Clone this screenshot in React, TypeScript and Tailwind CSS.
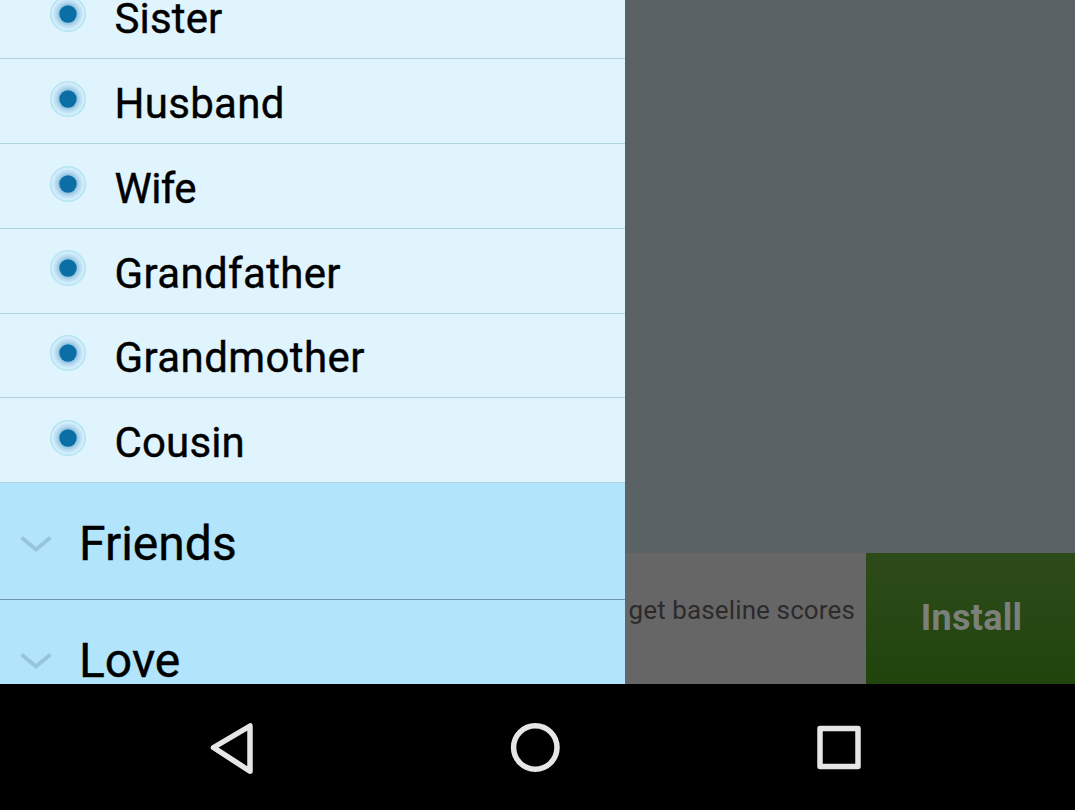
const relatives = [
  { name: "Sister", tracking: "tracking-[0.15px]" },
  { name: "Husband", tracking: "tracking-[0.3px]" },
  { name: "Wife", tracking: "tracking-[-0.6px]" },
  { name: "Grandfather", tracking: "tracking-[0.35px]" },
  { name: "Grandmother", tracking: "tracking-[0.4px]" },
  { name: "Cousin", tracking: "tracking-[0.15px]" },
];
const groups = ["Friends", "Love"];

function Bullet() {
  return (
    <svg viewBox="0 0 38 38" className="mb-[4.5px] ml-[49px] size-[38px] shrink-0">
      <defs>
        <radialGradient id="halo">
          <stop offset="0.6" stopColor="#93c3e0" />
          <stop offset="0.78" stopColor="#b4d9f0" />
          <stop offset="1" stopColor="#d0ebfa" />
        </radialGradient>
      </defs>
      <circle cx="19" cy="19" r="17.3" fill="#d3effb" stroke="#b5e4f3" strokeWidth="1.6" />
      <circle cx="19" cy="19" r="15" fill="url(#halo)" />
      <circle cx="19" cy="19" r="8.7" fill="#0b6fa6" />
    </svg>
  );
}

export default function App() {
  return (
    <div className="flex h-[810px] w-[1075px] flex-col overflow-hidden bg-black font-['Roboto',sans-serif]">
      <div className="flex h-[684px] shrink-0 overflow-hidden">
        <div className="flex w-[625px] shrink-0 flex-col justify-start overflow-hidden bg-[#b2e5fb] text-black">
          <div className="-mt-[25.7px] shrink-0">
            {relatives.map(({ name, tracking }) => (
              <div key={name} className="flex h-[84.8px] items-center border-b border-[#b0d3e0] bg-[#e0f4fe]">
                <Bullet />
                <span className={`ml-[27.5px] pt-[5.8px] text-[42px] leading-[50px] [-webkit-text-stroke:0.4px_black] ${tracking}`}>
                  {name}
                </span>
              </div>
            ))}
          </div>
          {groups.map((name) => (
            <div key={name} className="flex h-[117px] shrink-0 items-center border-b border-[#6e96a8]">
              <svg viewBox="0 0 32 18" className="ml-5 mt-[6px] h-[18px] w-8 shrink-0" fill="none" stroke="#98c5d9" strokeWidth="4">
                <path d="M1.500 2.500 16 14.500 30.500 2.500" />
              </svg>
              <span className="ml-[27px] pt-[5px] text-[48px] leading-[56px] [-webkit-text-stroke:0.4px_black]">{name}</span>
            </div>
          ))}
        </div>
        <div className="flex flex-1 flex-col bg-[#5b6266]">
          <div className="flex-1" />
          <div className="flex h-[131px]">
            <div className="w-[241px] whitespace-nowrap bg-[#666666] pl-[3.5px] pt-[41px] text-[26px] leading-[32px] tracking-[0.12px] text-[#2b2b2b]">
              get baseline scores
            </div>
            <div className="flex flex-1 items-center justify-center bg-linear-to-b from-[#2d4b1a] to-[#20440c] pb-[2px] pl-[2px] text-[36px] font-bold tracking-[0.25px] text-[#7c807a]">
              Install
            </div>
          </div>
        </div>
      </div>
      <div className="flex flex-1 items-center bg-black">
        <svg viewBox="0 0 1075 126" className="h-[126px] w-full" fill="none" stroke="#e6e6e6" strokeWidth="5.5" strokeLinejoin="round">
          <path d="M250 42v45.200L213.500 63.500Z" />
          <circle cx="535.300" cy="63.500" r="21.700" />
          <rect x="820" y="44.500" width="38" height="38" />
        </svg>
      </div>
    </div>
  );
}
